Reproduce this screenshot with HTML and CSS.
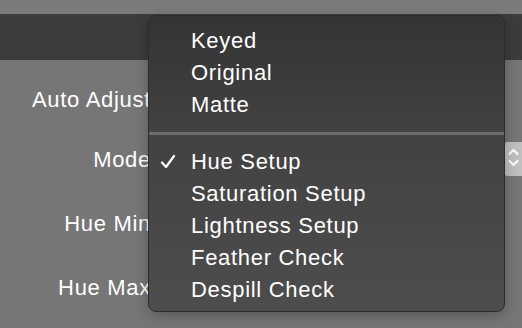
FILE: index.html
```html
<!DOCTYPE html>
<html>
<head>
<meta charset="utf-8">
<link rel="stylesheet" href="styles.css">
</head>
<body>
<div class="screen">
  <div class="topstrip"></div>
  <div class="toolbar"></div>
  <div class="panel">
    <div class="row row-auto"><span class="label">Auto Adjust</span></div>
    <div class="row row-mode">
      <span class="label">Mode</span>
      <span class="stepper">
        <svg width="18" height="34" viewBox="0 0 18 34">
          <path d="M5.5 12 L9.5 8 L13.5 12" fill="none" stroke="#fafafa" stroke-width="2.2" stroke-linecap="round" stroke-linejoin="round"/>
          <path d="M5.5 19 L9.5 23 L13.5 19" fill="none" stroke="#fafafa" stroke-width="2.2" stroke-linecap="round" stroke-linejoin="round"/>
        </svg>
      </span>
    </div>
    <div class="row row-gap"><span class="label">Hue Min</span></div>
    <div class="row row-gap"><span class="label">Hue Max</span></div>
  </div>
  <div class="menu">
    <div class="group">
      <div class="item">Keyed</div>
      <div class="item">Original</div>
      <div class="item">Matte</div>
    </div>
    <div class="separator"></div>
    <div class="group">
      <div class="item checked">
        <svg class="check" width="16" height="16" viewBox="0 0 16 16">
          <path d="M2 8.5 L6 13 L14 2" fill="none" stroke="#ffffff" stroke-width="2.2" stroke-linecap="round" stroke-linejoin="round"/>
        </svg>Hue Setup</div>
      <div class="item">Saturation Setup</div>
      <div class="item">Lightness Setup</div>
      <div class="item">Feather Check</div>
      <div class="item">Despill Check</div>
    </div>
  </div>
</div>
</body>
</html>
```
FILE: styles.css
```css
html, body {
  margin: 0;
  padding: 0;
}
body {
  width: 522px;
  height: 328px;
  overflow: hidden;
  background: #767676;
  font-family: "Liberation Sans", Arial, sans-serif;
  font-size: 22px;
  letter-spacing: 0.7px;
  color: #ffffff;
}
.screen {
  position: relative;
  width: 522px;
  height: 328px;
  display: flex;
  flex-direction: column;
}
.topstrip {
  height: 14px;
  background: #7b7b7b;
}
.toolbar {
  height: 46px;
  background: #3c3c3c;
}
.panel {
  flex: 1;
  padding-top: 24px;
  display: flex;
  flex-direction: column;
}
.row {
  height: 32px;
  display: flex;
  align-items: center;
}
.row-mode {
  margin-top: 28px;
}
.row-gap {
  margin-top: 32px;
}
.label {
  width: 151px;
  text-align: right;
  white-space: nowrap;
  line-height: 32px;
}
.stepper {
  margin-left: auto;
  width: 18px;
  height: 34px;
  background: #bfbfbf;
  border-radius: 4px 0 0 4px;
  display: flex;
  position: relative;
  top: -1px;
}
.menu {
  position: absolute;
  left: 148px;
  top: 15px;
  width: 357px;
  height: 297px;
  padding: 9px 0 8px 0;
  box-sizing: border-box;
  border: 1px solid #2c2c2c;
  border-radius: 8px;
  background: linear-gradient(to bottom, #343434 0%, #424242 40%, #4d4d4d 100%);
  box-shadow: 0 4px 14px rgba(0, 0, 0, 0.25);
}
.item {
  height: 32px;
  line-height: 32px;
  padding-left: 42px;
  position: relative;
  white-space: nowrap;
}
.check {
  position: absolute;
  left: 11px;
  top: 8px;
}
.separator {
  height: 3px;
  background: #6b6b6b;
  margin: 11px 0 11px 0;
}
```
